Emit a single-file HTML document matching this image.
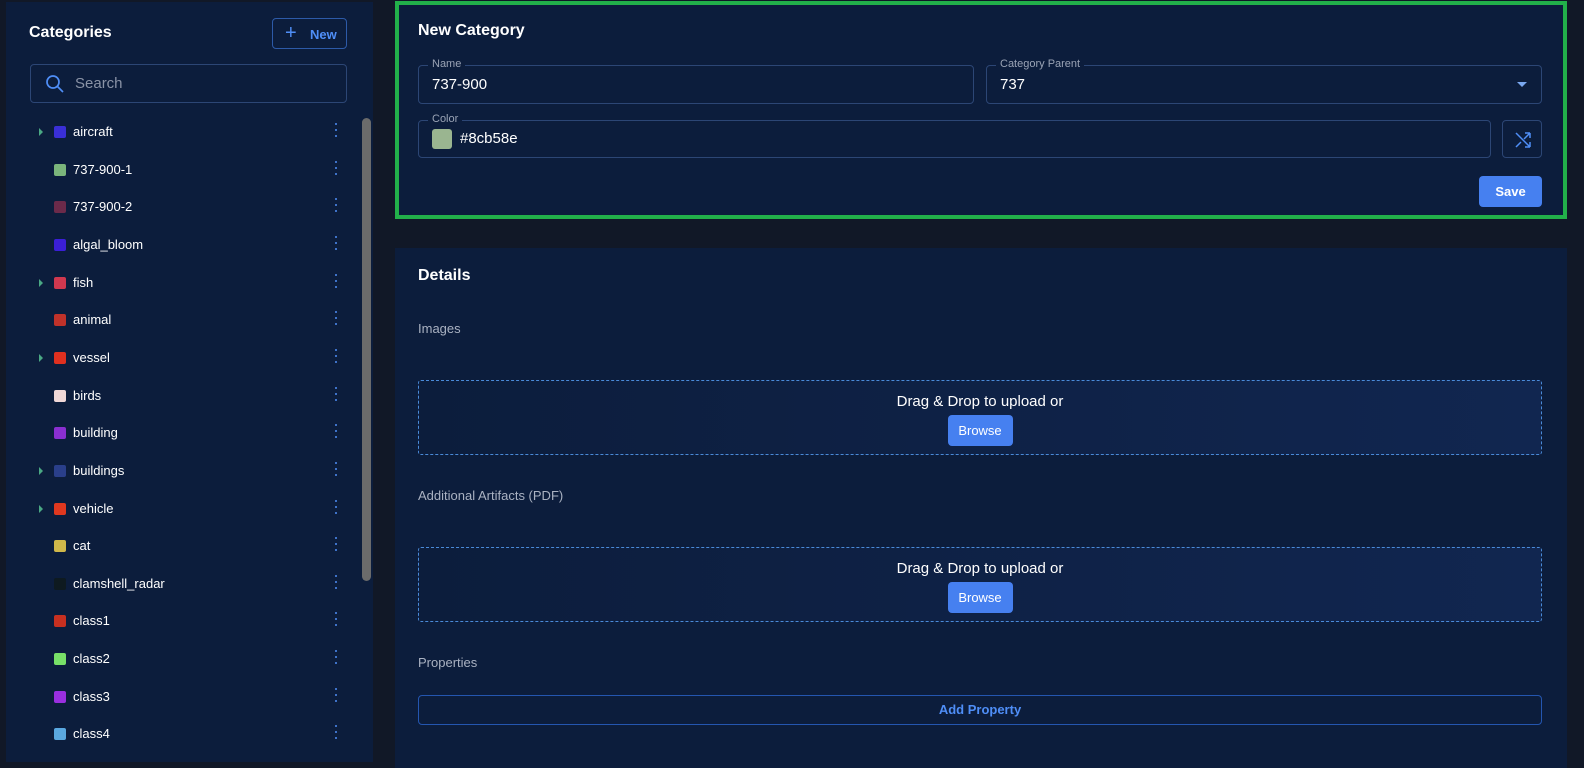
<!DOCTYPE html>
<html><head><style>
*{box-sizing:border-box;margin:0;padding:0}
body{width:1584px;height:755px;background:#111827;font-family:"Liberation Sans",sans-serif;color:#fff;position:relative;overflow:hidden}
.lp{position:absolute;left:6px;top:2px;width:367px;height:760px;background:#0c1d3c}
.h{font-weight:bold;font-size:16px;position:absolute}
.newb{position:absolute;left:266px;top:16px;width:75px;height:31px;border:1px solid #2d5aa8;border-radius:4px;color:#4f8ef7;font-size:13px;font-weight:bold}
.search{position:absolute;left:24px;top:62px;width:317px;height:39px;border:1px solid #2c4675;border-radius:4px;color:#8a93a6;font-size:15px}
.row{position:absolute;left:0;height:20px;width:350px;font-size:13px}
.row .sw{position:absolute;left:54px;top:4px;width:12px;height:12px;border-radius:2px}
.row .t{position:absolute;left:73px;top:2px}
.row .ar{position:absolute;left:39px;top:6px;width:0;height:0;border-left:4px solid #4aa884;border-top:4px solid transparent;border-bottom:4px solid transparent}
.row .d{position:absolute;left:335px;top:1px;width:3px}
.row .d i{display:block;width:2px;height:2px;background:#4f8ef7;margin-bottom:4px;border-radius:1px}
.sb{position:absolute;left:356px;top:116px;width:9px;height:463px;background:#6b6b6b;border-radius:5px}
.card1{position:absolute;left:395px;top:1px;width:1172px;height:218px;background:#0c1d3c;border:4px solid #22b04a}
.fld{position:absolute;border:1px solid #2c4675;border-radius:4px;height:39px}
.fld .lb{position:absolute;left:9px;top:-8px;background:#0c1d3c;padding:0 4px;font-size:11px;color:#9aa3b5}
.fld .v{position:absolute;left:13px;top:10px;font-size:15px}
.btn{position:absolute;background:#4680f0;border-radius:4px;color:#fff;font-size:13px;font-weight:bold;text-align:center}
.card2{position:absolute;left:395px;top:248px;width:1172px;height:520px;background:#0c1d3c}
.lab{position:absolute;font-size:13px;color:#aab2c2}
.dz{position:absolute;left:23px;width:1124px;height:75px;border:1px dashed #4a8ad8;border-radius:3px;background:linear-gradient(90deg,#0c1d3c,#112650);text-align:center}
.dz p{font-size:15px;margin-top:12px}
.dz .btn{font-weight:normal}
</style></head><body>
<div class="lp">
 <div class="h" style="left:23px;top:22px">Categories</div>
 <div class="newb"><span style="position:absolute;left:12px;top:3px;font-size:20px;font-weight:normal">+</span><span style="position:absolute;left:37px;top:8px">New</span></div>
 <div class="search"><svg style="position:absolute;left:14px;top:9px" width="20" height="20" viewBox="0 0 20 20"><circle cx="8" cy="8" r="6" fill="none" stroke="#4f8ef7" stroke-width="1.7"/><line x1="12.5" y1="12.5" x2="18" y2="18" stroke="#4f8ef7" stroke-width="1.7"/></svg><span style="position:absolute;left:44px;top:10px">Search</span></div>
 <div class="sb"></div>
</div>
<div id="rows"></div>
<div class="card1">
 <div class="h" style="left:19px;top:17px">New Category</div>
 <div class="fld" style="left:19px;top:60px;width:556px"><span class="lb">Name</span><span class="v">737-900</span></div>
 <div class="fld" style="left:587px;top:60px;width:556px"><span class="lb">Category Parent</span><span class="v">737</span><span style="position:absolute;right:14px;top:16px;border-top:5px solid #7aa8f0;border-left:5px solid transparent;border-right:5px solid transparent"></span></div>
 <div class="fld" style="left:19px;top:115px;width:1073px;height:38px"><span class="lb">Color</span><span style="position:absolute;left:13px;top:8px;width:20px;height:20px;border-radius:3px;background:#9ab590"></span><span class="v" style="left:41px;top:9px">#8cb58e</span></div>
 <div class="fld" style="left:1103px;top:115px;width:40px;height:38px"><svg style="position:absolute;left:12px;top:11px" width="16" height="16" viewBox="0 0 16 16" fill="none" stroke="#4f8ef7" stroke-width="1.5"><path d="M1 1L15 15M15 15H10M15 15V10M1 15L6 10M9 7L15 1M15 1H10M15 1V6"/></svg></div>
 <div class="btn" style="left:1080px;top:171px;width:63px;height:31px;line-height:31px">Save</div>
</div>
<div class="card2">
 <div class="h" style="left:23px;top:19px">Details</div>
 <div class="lab" style="left:23px;top:73px">Images</div>
 <div class="dz" style="top:132px"><p>Drag &amp; Drop to upload or</p><div class="btn" style="position:relative;display:inline-block;width:65px;height:31px;line-height:31px;margin-top:5px">Browse</div></div>
 <div class="lab" style="left:23px;top:240px">Additional Artifacts (PDF)</div>
 <div class="dz" style="top:299px"><p>Drag &amp; Drop to upload or</p><div class="btn" style="position:relative;display:inline-block;width:65px;height:31px;line-height:31px;margin-top:5px">Browse</div></div>
 <div class="lab" style="left:23px;top:407px">Properties</div>
 <div style="position:absolute;left:23px;top:447px;width:1124px;height:30px;border:1px solid #2456b0;border-radius:4px;text-align:center;line-height:28px;color:#4f8ef7;font-size:13px;font-weight:bold">Add Property</div>
</div>
<script>
var d=[["aircraft","#3a2fd6",1],["737-900-1","#7bb57b",0],["737-900-2","#6b2a4a",0],["algal_bloom","#3b1fd8",0],["fish","#d0384f",1],["animal","#c0322a",0],["vessel","#e0301f",1],["birds","#f0d8d8",0],["building","#8a2fd0",0],["buildings","#2a3f8a",1],["vehicle","#e0381f",1],["cat","#d0b84a",0],["clamshell_radar","#0e1a20",0],["class1","#c83020",0],["class2","#78e068",0],["class3","#9a2fe0",0],["class4","#5aa8e0",0]];
var h="";d.forEach(function(r,i){var y=Math.round(122+i*37.65);h+='<div class="row" style="top:'+y+'px">'+(r[2]?'<span class="ar"></span>':'')+'<span class="sw" style="background:'+r[1]+'"></span><span class="t">'+r[0]+'</span><span class="d"><i></i><i></i><i></i></span></div>';});
document.getElementById("rows").innerHTML=h;
</script>
</body></html>
